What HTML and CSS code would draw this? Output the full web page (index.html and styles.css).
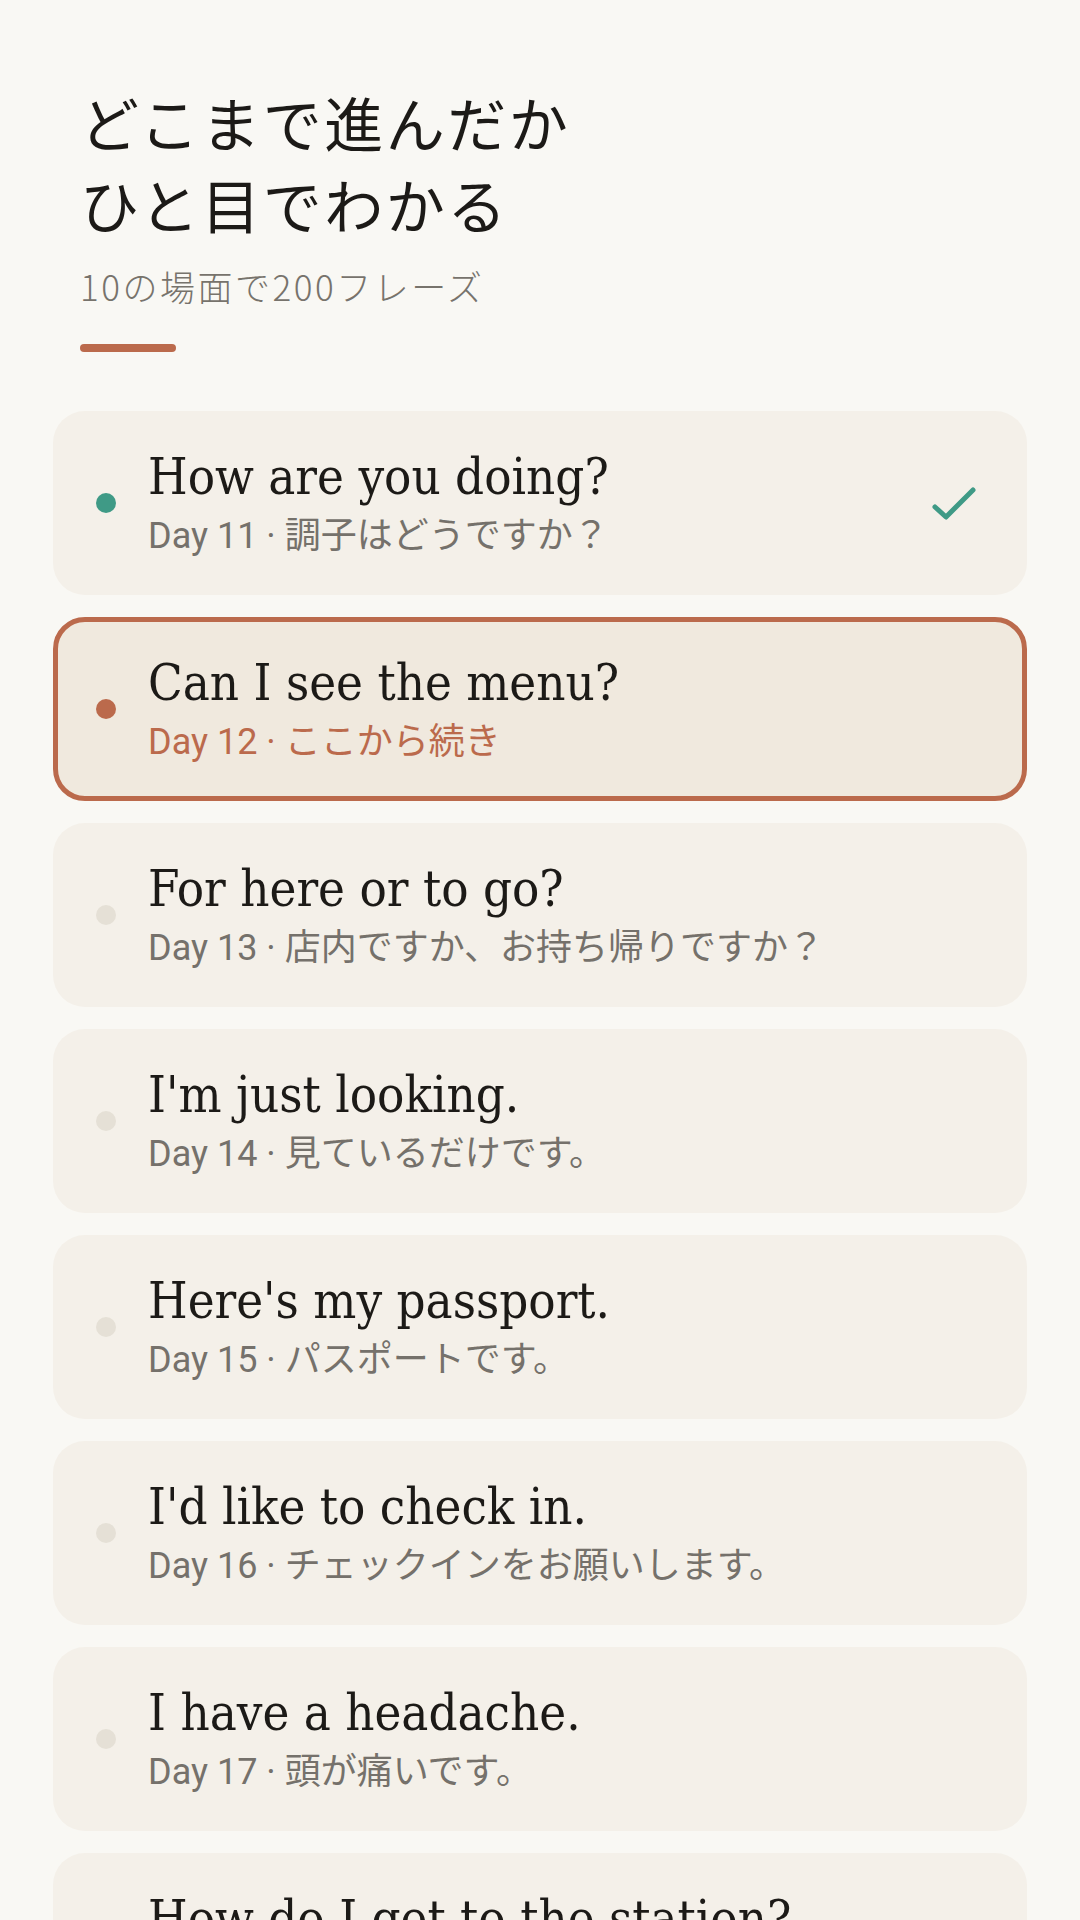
FILE: index.html
```html
<!DOCTYPE html>
<html lang="ja">
<head>
  <meta charset="UTF-8">
  <meta name="viewport" content="width=device-width, initial-scale=1.0">
  <title>進み具合</title>
  <link rel="stylesheet" href="styles.css">
</head>
<body>
  <div class="page">
    <header class="intro">
      <h1>どこまで進んだか<br>ひと目でわかる</h1>
      <p class="intro-sub">10の場面で200フレーズ</p>
      <div class="accent-bar"></div>
    </header>

    <!-- Phrase list -->
    <div class="phrase-list">
      <div class="phrase-card done">
        <span class="dot"></span>
        <div class="phrase-text">
          <h3>How are you doing?</h3>
          <p>Day 11 · 調子はどうですか？</p>
        </div>
        <svg class="check" viewBox="0 0 48 48" width="48" height="48">
          <path d="M5 28 L16 38 L43 11" fill="none" stroke="#3f9a86" stroke-width="5" stroke-linecap="round" stroke-linejoin="round"/>
        </svg>
      </div>
      <div class="phrase-card current">
        <span class="dot"></span>
        <div class="phrase-text">
          <h3>Can I see the menu?</h3>
          <p>Day 12 · ここから続き</p>
        </div>
      </div>
      <div class="phrase-card">
        <span class="dot"></span>
        <div class="phrase-text">
          <h3>For here or to go?</h3>
          <p>Day 13 · 店内ですか、お持ち帰りですか？</p>
        </div>
      </div>
      <div class="phrase-card">
        <span class="dot"></span>
        <div class="phrase-text">
          <h3>I'm just looking.</h3>
          <p>Day 14 · 見ているだけです。</p>
        </div>
      </div>
      <div class="phrase-card">
        <span class="dot"></span>
        <div class="phrase-text">
          <h3>Here's my passport.</h3>
          <p>Day 15 · パスポートです。</p>
        </div>
      </div>
      <div class="phrase-card">
        <span class="dot"></span>
        <div class="phrase-text">
          <h3>I'd like to check in.</h3>
          <p>Day 16 · チェックインをお願いします。</p>
        </div>
      </div>
      <div class="phrase-card">
        <span class="dot"></span>
        <div class="phrase-text">
          <h3>I have a headache.</h3>
          <p>Day 17 · 頭が痛いです。</p>
        </div>
      </div>
      <div class="phrase-card">
        <span class="dot"></span>
        <div class="phrase-text">
          <h3>How do I get to the station?</h3>
          <p>Day 18 · 駅へはどう行けばいいですか？</p>
        </div>
      </div>
    </div>
  </div>
</body>
</html>
```

FILE: styles.css
```css
*,
*::before,
*::after {
  box-sizing: border-box;
  margin: 0;
  padding: 0;
}

body {
  background-color: #f9f8f4;
  font-family: Roboto, "Noto Sans CJK JP", sans-serif;
  color: #1c1a17;
}

.page {
  padding: 0 53px 60px;
}

/* Header */
.intro {
  padding: 81px 0 0 27px;
}

.intro h1 {
  font-family: "Noto Sans CJK JP", sans-serif;
  font-weight: 400;
  font-size: 59px;
  line-height: 82px;
  letter-spacing: 2.5px;
  color: #1c1a17;
}

.intro-sub {
  margin-top: 17px;
  font-family: "Noto Sans CJK JP", sans-serif;
  font-weight: 300;
  font-size: 35px;
  line-height: 48px;
  letter-spacing: 2.5px;
  color: #77736c;
}

.accent-bar {
  margin-top: 34px;
  width: 96px;
  height: 8px;
  border-radius: 4px;
  background-color: #bb6a4c;
}

/* Phrase list */
.phrase-list {
  margin-top: 59px;
  display: flex;
  flex-direction: column;
  gap: 22px;
}

.phrase-card {
  display: flex;
  align-items: center;
  height: 184px;
  padding: 0 44px 0 38px;
  border: 5px solid transparent;
  border-radius: 32px;
  background-color: #f4f0e9;
}

.phrase-card.current {
  border-color: #bb6a4c;
  background-color: #f0e9de;
}

.dot {
  flex: none;
  width: 20px;
  height: 20px;
  border-radius: 50%;
  background-color: #e5e0d6;
}

.done .dot {
  background-color: #3f9a86;
}

.current .dot {
  background-color: #bb6a4c;
}

.phrase-text {
  margin-left: 32px;
  flex: 1;
}

.phrase-text h3 {
  margin-top: -3px;
  font-family: "DejaVu Serif", serif;
  font-stretch: condensed;
  font-weight: 400;
  font-size: 50.5px;
  line-height: 64px;
  color: #1c1a17;
  white-space: nowrap;
}

.phrase-text p {
  margin-top: 5px;
  font-size: 36px;
  line-height: 44px;
  color: #75716b;
}

.current .phrase-text p {
  color: #bb6a4c;
}

.check {
  flex: none;
}
```
